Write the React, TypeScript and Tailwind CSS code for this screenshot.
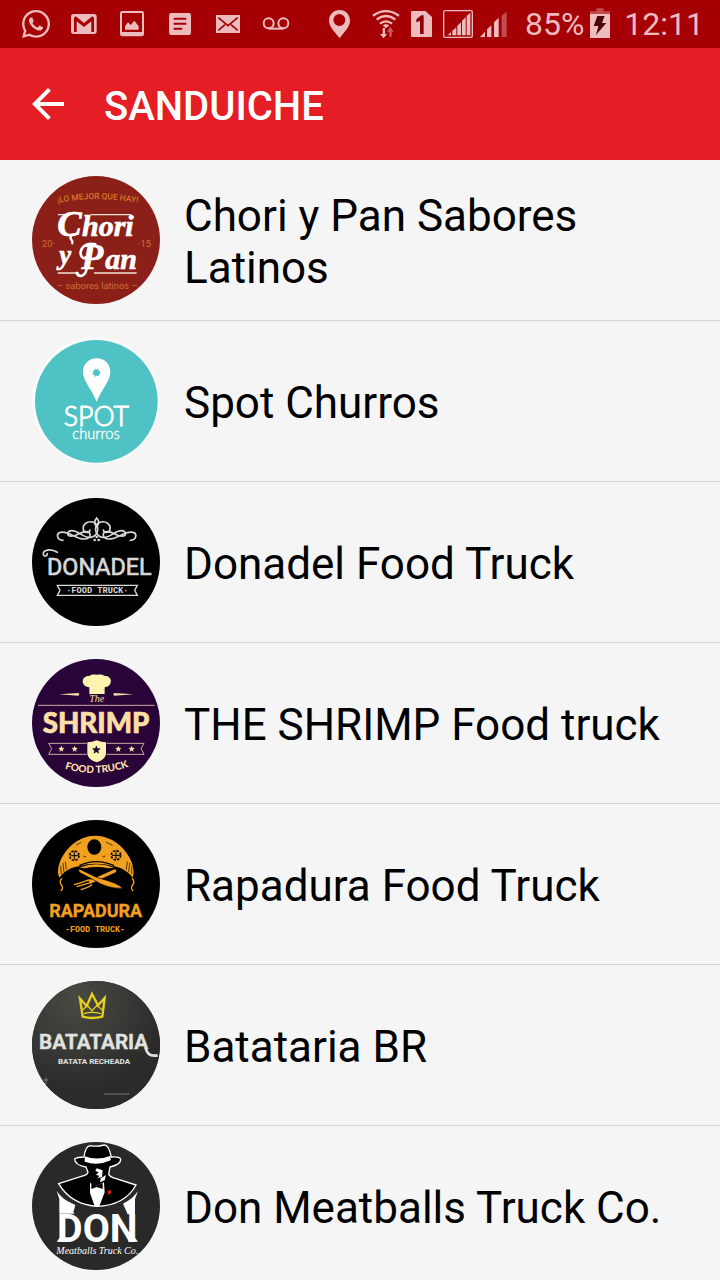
import type { ReactNode } from "react";
import { FaWhatsapp } from "react-icons/fa";
import { MdArrowBack } from "react-icons/md";

function Glyph({ box, className, children }: { box: string; className: string; children: ReactNode }) {
  return (
    <svg viewBox={box} className={className} fill="currentColor" aria-hidden="true">
      {children}
    </svg>
  );
}

function StatusBar() {
  return (
    <div className="flex h-12 shrink-0 items-center justify-between bg-[#a50003] pl-5 pr-4 text-[#eebcbe]">
      <div className="flex items-center gap-4">
        <FaWhatsapp className="size-8" aria-hidden="true" />
        <Glyph box="204 24 96 96" className="size-8">
          <path
            fillRule="evenodd"
            d="M221 42h61q8 0 8 8v44q0 8-8 8h-61q-8 0-8-8V50q0-8 8-8zM222 53v43h8V64l22 17 22-17v32h8V53l-5-4-25 20-25-20z"
          />
        </Glyph>
        <Glyph box="348 24 96 96" className="size-8">
          <path
            fillRule="evenodd"
            d="M367 33h58q7 0 7 7v62q0 7-7 7h-58q-7 0-7-7V40q0-7 7-7zM366 39v57h60V39zM375 89V79l9-12 8 8 11-13 13 17v10z"
          />
        </Glyph>
        <Glyph box="492 24 96 96" className="size-8">
          <path
            fillRule="evenodd"
            d="M514 39h52q7 0 7 7v52q0 7-7 7h-52q-7 0-7-7V46q0-7 7-7zM521 53v6h38v-6zM521 68v6h38v-6zM521 83v6h26v-6z"
          />
        </Glyph>
        <Glyph box="636 24 96 96" className="size-8">
          <path d="M648 45h72v54h-72z" />
          <path d="M655 53l29 24 29-24M655 91l20-17M713 91l-20-17" fill="none" stroke="#a50003" strokeWidth="5" />
        </Glyph>
        <Glyph box="780 24 96 96" className="size-8">
          <g fill="none" stroke="currentColor" strokeWidth="6">
            <circle cx="806" cy="70" r="15" />
            <circle cx="850" cy="70" r="15" />
            <path d="M806 86h44" />
          </g>
        </Glyph>
      </div>
      <div className="flex items-center">
        <Glyph box="984 24 66 96" className="h-8 w-[22px]">
          <path
            fillRule="evenodd"
            d="M1016 30c18 0 31 14 31 32 0 20-20 36-31 53-11-17-32-33-32-53 0-18 14-32 32-32zM1015 42a18 18 0 1 0 .1 36 18 18 0 1 0-.1-36z"
          />
        </Glyph>
        <Glyph box="30 24 90 96" className="ml-5 h-8 w-[30px]">
          <g fill="none" stroke="currentColor" strokeWidth="7">
            <path d="M36 47q39-27 78 0" />
            <path d="M47 59q28-22 56 0" />
            <path d="M57 71q18-14 36 0" />
          </g>
          <path d="M65 76q10-7 20 0l-10 9z" />
          <path d="M65 84h7v18h6l-10 13-11-13h8z" />
          <path d="M85 110h7V95h6L88 80 78 95h7z" opacity=".5" />
        </Glyph>
        <Glyph box="150 24 66 96" className="ml-[10px] h-8 w-[22px]">
          <path d="M153 33h40l20 18v57q0 3-3 3h-57q-3 0-3-3V36q0-3 3-3z" />
          <path d="M188 46v56h-11V63l-11 4v-9l15-12z" fill="#8d0004" />
        </Glyph>
        <Glyph box="246 24 90 96" className="ml-[10px] h-8 w-[30px]">
          <rect x="248" y="32" width="86" height="80" rx="5" fill="none" stroke="currentColor" strokeWidth="4" />
          <path d="M260 106l10-10v10zM274 92l12-10v24h-12zM289 77l11-10v39h-11zM303 62l11-10v54h-11zM317 48l11-10v68h-11z" />
        </Glyph>
        <Glyph box="354 24 84 96" className="ml-[6px] h-8 w-7">
          <path d="M357 111l15-16v16zM378 88l13-12v35h-13zM399 67l14-14v58h-14z" />
          <path d="M422 47l15-12v76h-15z" opacity=".4" />
        </Glyph>
        <span className="ml-[18px] text-[32px] leading-8">85%</span>
        <Glyph box="693 24 60 96" className="ml-[6px] h-8 w-5">
          <path d="M712 25h22v9h-22zM693 34h60v8h-60z" opacity=".4" />
          <path d="M693 42h60v72h-60z" />
          <path d="M715 48h22l-8 21h13l-31 36 7-27h-14z" fill="#4c0508" />
        </Glyph>
        <span className="ml-[14px] text-[32px] leading-8">12:11</span>
      </div>
    </div>
  );
}

function Logo({ color, children }: { color: string; children: ReactNode }) {
  return (
    <svg viewBox="36 33 384 384" className="size-32 shrink-0 rounded-full" aria-hidden="true">
      <rect x="36" y="33" width="384" height="384" fill={color} />
      {children}
    </svg>
  );
}

function ChoriLogo() {
  return (
    <Logo color="#8b2018">
      <path id="chori-arc" d="M104 116Q232 88 362 116" fill="none" />
      <text className="font-['Roboto',sans-serif] text-[25px] font-medium" fill="#d07a28" textAnchor="middle">
        <textPath href="#chori-arc" startOffset="50%">¡LO MEJOR QUE HAY!</textPath>
      </text>
      <path d="M114 149h20M212 149h122M113 324h64M222 324h128" stroke="#f2dfd8" strokeWidth="4" />
      <g fill="#fff" stroke="#fff" strokeWidth="2" className="font-['Liberation_Serif',serif] font-bold italic">
        <text x="112" y="212" className="text-[110px]">C</text>
        <text x="186" y="212" className="text-[90px]">hori</text>
        <text x="118" y="298" className="text-[80px]">y</text>
        <text x="184" y="312" className="text-[108px]">P</text>
        <text x="256" y="312" className="text-[90px]">an</text>
      </g>
      <g fill="none" stroke="#fff" strokeLinecap="round">
        <path d="M154 213c-10 10 8 12 3 22" strokeWidth="7" />
        <path d="M226 238c-26-6-46 8-44 30 2 12 12 14 18 8" strokeWidth="8" />
        <path d="M200 310c-4 26-24 28-30 14" strokeWidth="8" />
      </g>
      <g className="font-['Roboto',sans-serif] text-[28px]" fill="#d07030">
        <text x="66" y="245">20·</text>
        <text x="354" y="245">·15</text>
        <text x="232" y="371" textAnchor="middle">– sabores latinos –</text>
      </g>
    </Logo>
  );
}

function SpotLogo() {
  return (
    <Logo color="#fafafa">
      <circle cx="229" cy="226" r="184" fill="#4fc2c5" />
      <path d="M230 97c24 0 41 18 41 41 0 28-27 52-41 90-14-38-41-62-41-90 0-23 17-41 41-41z" fill="#fff" />
      <circle cx="229" cy="140" r="9" fill="#4fc2c5" />
      <circle cx="229" cy="140" r="10" fill="none" stroke="#4fc2c5" strokeWidth="4" strokeDasharray="4 4" />
      <g fill="#fff" stroke="#fff" textAnchor="middle" className="font-['Lato',sans-serif] font-light">
        <text x="229" y="300" strokeWidth="3" className="text-[80px]">SPOT</text>
        <text x="228" y="339" strokeWidth="1" className="text-[44px]">churros</text>
      </g>
    </Logo>
  );
}

function DonadelLogo() {
  return (
    <Logo color="#000">
      <g fill="none" stroke="#d9d9d9" strokeWidth="5" strokeLinecap="round">
        <path d="M129 160c-18 0-22-20-8-24 26-6 46 22 74 20 20-2 20-24 2-22-22 2-28 16-48 13-10-2-6-16 6-16 22 0 36 24 58 20 22-4 28-34 8-45-18-6-34 6-31 21 2 12 18 12 20 2" />
        <path d="M331 160c18 0 22-20 8-24-26-6-46 22-74 20-20-2-20-24-2-22 22 2 28 16 48 13 10-2 6-16-6-16-22 0-36 24-58 20-22-4-28-34-8-45 18-6 34 6 31 21-2 12-18 12-20 2" />
        <path d="M230 93q-12 13 0 26 12-13 0-26z" />
        <path d="M112 295h240l-8 15 8 15H112l8-15z" strokeWidth="4" />
        <path d="M112 196c-20-12-44-8-42 6 2 8 12 6 12-2" />
      </g>
      <g fill="#d9d9d9">
        <circle cx="230" cy="150" r="4" />
        <circle cx="224" cy="159" r="4" />
        <circle cx="236" cy="159" r="4" />
        <text x="238" y="264" textAnchor="middle" stroke="#d9d9d9" strokeWidth="2" className="font-['Roboto',sans-serif] text-[70px]">
          DONADEL
        </text>
        <text x="232" y="319" textAnchor="middle" className="font-['Liberation_Mono',monospace] text-[26px] font-bold">
          ·FOOD TRUCK·
        </text>
      </g>
    </Logo>
  );
}

const STAR = "M0-10L2.6-3.6 9.5-3.1 4.2 1.4 5.9 8.1 0 4.5-5.9 8.1-4.2 1.4-9.5-3.1-2.6-3.6z";

function ShrimpLogo() {
  return (
    <Logo color="#280438">
      <path
        d="M208 138v-20c-28-3-25-36 0-34 8-6 14-4 22-4s16-2 24 4c24-2 26 31 0 34v20z"
        fill="#fff3b0"
      />
      <path d="M117 139l58-4q6 4 0 8zM341 139l-58-4q-6 4 0 8z" fill="#f6dca8" />
      <path d="M54 172h350" stroke="#cda9a0" strokeWidth="3" />
      <g fill="#fbdfa6" textAnchor="middle">
        <text x="230" y="163" className="font-['Liberation_Serif',serif] text-[30px] italic">The</text>
        <text x="228" y="256" stroke="#fbdfa6" strokeWidth="2" className="font-['Lato',sans-serif] text-[83px] font-black">
          SHRIMP
        </text>
      </g>
      <path d="M200 286H86l9 16-9 17h114M260 286h112l-9 16 9 17H260" fill="none" stroke="#cda9a0" strokeWidth="3" />
      <path d="M202 283q14 0 28-6 14 6 28 6v36q-4 17-28 24-24-7-28-24z" fill="#fff3b0" />
      <g fill="#fbdfa6">
        <path d={STAR} transform="translate(124 303)" />
        <path d={STAR} transform="translate(164 303)" />
        <path d={STAR} transform="translate(295 303)" />
        <path d={STAR} transform="translate(335 303)" />
      </g>
      <path d={STAR} transform="translate(229 306) scale(1.4)" fill="#280438" />
      <path id="shrimp-arc" d="M128 360Q230 392 332 354" fill="none" />
      <text className="font-['Lato',sans-serif] text-[30px] font-black" fill="#fbdfa6" textAnchor="middle">
        <textPath href="#shrimp-arc" startOffset="50%">FOOD TRUCK</textPath>
      </text>
    </Logo>
  );
}

function RapaduraLogo() {
  return (
    <Logo color="#000">
      <path
        d="M118 206C100 166 150 80 226 80s128 84 112 126c-20-24-38-32-60-34-26-10-76-10-98 0-24 2-42 10-62 34z"
        fill="#f2a01f"
      />
      <ellipse cx="223" cy="114" rx="21" ry="23" />
      <g fill="none" stroke="#000">
        <circle cx="163" cy="140" r="14" strokeWidth="5" strokeDasharray="7 4" />
        <circle cx="288" cy="139" r="14" strokeWidth="5" strokeDasharray="7 4" />
        <path d="M163 128v24M151 140h24M288 127v24M276 139h24" strokeWidth="3" />
        <path d="M168 108l16-8M258 99l20 10M190 141l8 3M248 144l8-3" strokeWidth="2" />
        <path d="M122 170l2 26M129 162l3 28M136 158l3 24M336 170l-2 26M329 162l-3 28M322 158l-3 24" strokeWidth="2" />
        <path d="M178 170q50-24 104 0" strokeWidth="4" />
      </g>
      <path d="M178 176q52-20 104 0l-16 2q-36-8-72 0z" fill="#f2a01f" />
      <g stroke="#f2a01f" fill="none">
        <path d="M126 208q-10 10-2 20t-2 18M336 208q10 10 2 20t2 18" strokeWidth="4" />
        <path d="M284 186l-72 32" strokeWidth="10" strokeLinecap="round" />
        <path d="M216 214c-12-4-20 4-30 6l-24 7M214 220l-44 13M216 226c-8 10-18 10-34 16" strokeWidth="4" />
      </g>
      <path d="M178 180l54 26q64 16 76 32-46 2-88-26l-42-22q-4-8 0-10z" fill="#f2a01f" stroke="#000" strokeWidth="2" />
      <g fill="#f2a01f" textAnchor="middle">
        <text x="227" y="323" stroke="#f2a01f" strokeWidth="1" className="font-['Roboto',sans-serif] text-[54px] font-bold">
          RAPADURA
        </text>
        <text x="225" y="368" className="font-['Liberation_Mono',monospace] text-[25px] font-bold">-FOOD TRUCK-</text>
      </g>
    </Logo>
  );
}

function BatatariaLogo() {
  return (
    <Logo color="#2c2c2b">
      <defs>
        <radialGradient id="slate" cx=".35" cy=".15" r=".7">
          <stop offset="0" stopColor="#4a4a43" />
          <stop offset="1" stopColor="#2b2b2b" />
        </radialGradient>
      </defs>
      <rect x="36" y="33" width="384" height="384" fill="url(#slate)" />
      <g fill="none" stroke="#e8cf1c" strokeWidth="7">
        <path d="M188 140l-8-54 20 22 16-36 18 34 20-22-7 56q-30 8-59 0z" />
        <path d="M188 120l14-14 14 16 15-16 16 14M192 131q24-8 50 0" strokeWidth="4" />
      </g>
      <g fill="#e2e2e0" textAnchor="middle" className="font-['Roboto',sans-serif] font-bold">
        <text x="221" y="238" stroke="#e2e2e0" strokeWidth="1" className="text-[62px]">BATATARIA</text>
        <text x="222" y="282" className="text-[24px]">BATATA RECHEADA</text>
      </g>
      <path d="M377 234q6 28 36 22" fill="none" stroke="#e2e2e0" strokeWidth="8" />
      <path d="M78 322v20M70 330h15M252 372h76" stroke="#a0a09c" strokeWidth="2" />
    </Logo>
  );
}

function DonLogo() {
  return (
    <Logo color="#292929">
      <path
        d="M116 158l68-22q18-4 20-12l-6-16q-34-6-34-24 8-6 28-6 4-32 18-34 20 4 42-2 14-2 22 36 22-2 28 6 2 16-32 24l-4 22q4 8 20 12l62 20q-34 62-118 64-78-6-114-68z"
        fill="#000"
        stroke="#fff"
        strokeWidth="4"
      />
      <path d="M194 76q40 14 78-2v14q-38 18-78 4z" fill="#fff" />
      <path d="M230 112l18 6-2 20-14 4 6-8-10-2 8-8-10-4zM242 142l16-10-4 16-14 6z" fill="#fff" />
      <path d="M210 156l20 8 22-10 2 30-16 42h-14l-14-40z" fill="#fff" />
      <path d="M214 156l16 8 18-8v18l-18-6-16 6z" fill="#000" />
      <path d="M262 180l10-4 2 10-8 6z" fill="#d91c1c" />
      <path d="M110 180q14 20 32 30l24 12-6 22 4 4h-46V204zM354 180q-14 20-31 30l-14 8 14 32h22V204z" fill="#fff" />
      <path d="M110 332l9-12h22v12zM354 332l-9-12h-20v12z" fill="#fff" />
      <g fill="#fff" textAnchor="middle">
        <text x="232" y="332" className="font-['Roboto',sans-serif] text-[118px] font-bold">
          DON
        </text>
        <text x="232" y="369" className="font-['Liberation_Serif',serif] text-[30px] italic">Meatballs Truck Co.</text>
      </g>
    </Logo>
  );
}

const trucks = [
  { name: "Chori y Pan Sabores Latinos", Badge: ChoriLogo },
  { name: "Spot Churros", Badge: SpotLogo },
  { name: "Donadel Food Truck", Badge: DonadelLogo },
  { name: "THE SHRIMP Food truck", Badge: ShrimpLogo },
  { name: "Rapadura Food Truck", Badge: RapaduraLogo },
  { name: "Batataria BR", Badge: BatatariaLogo },
  { name: "Don Meatballs Truck Co.", Badge: DonLogo },
];

export default function App() {
  return (
    <div className="flex h-screen flex-col bg-[#f5f5f5] font-['Roboto',sans-serif] text-black">
      <StatusBar />
      <header className="flex h-28 shrink-0 items-center gap-8 bg-[#e41e24] pl-6 text-white">
        <button type="button" aria-label="Voltar">
          <MdArrowBack className="size-12" aria-hidden="true" />
        </button>
        <h1 className="pt-1.5 text-[40px] leading-[48px] font-medium">SANDUICHE</h1>
      </header>
      <ul className="min-h-0 flex-1 divide-y divide-[#d6d6d6] overflow-y-auto [scrollbar-width:none]">
        {trucks.map(({ name, Badge }) => (
          <li key={name}>
            <a href="#" className="flex items-center gap-6 px-8 py-4">
              <Badge />
              <span className="pt-1 text-[44px] leading-[52px]">{name}</span>
            </a>
          </li>
        ))}
      </ul>
    </div>
  );
}
